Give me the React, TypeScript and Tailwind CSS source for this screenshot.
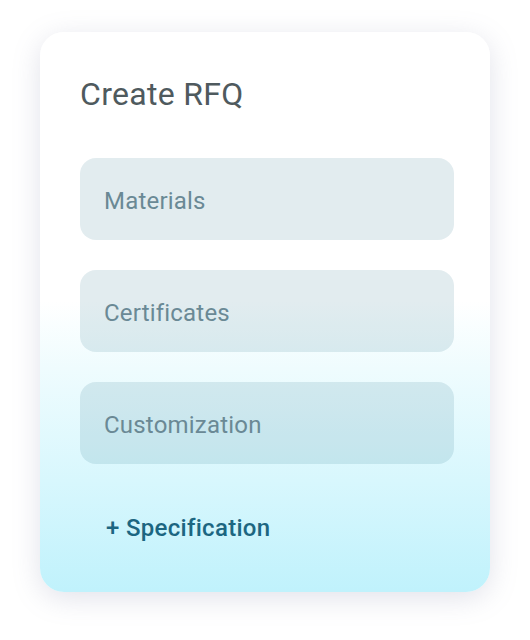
import React from "react";

const fields = ["Materials", "Certificates", "Customization"];

const App = () => {
  return (
    <div className="w-[530px] h-[640px] bg-white flex justify-center pt-[32px] font-['Roboto',sans-serif]">
      <div className="w-[450px] h-[560px] rounded-[24px] bg-[linear-gradient(180deg,#ffffff_0%,#ffffff_48%,#effcfe_60%,#d8f7fd_80%,#c0f2fc_100%)] shadow-[0_6px_28px_rgba(120,125,160,0.22)] px-[40px] pt-[43px] flex flex-col">
        <h1 className="text-[32px] leading-[38px] tracking-[0.3px] text-[#4f5a5e] font-normal">Create RFQ</h1>
        <div className="mt-[45px] flex flex-col gap-[30px]">
          {fields.map((f) => (
            <div
              key={f}
              className="h-[82px] w-[374px] rounded-[16px] bg-[#1f6a80]/[0.13] flex items-center px-[24px]"
            >
              <span className="mt-[3px] text-[24px] tracking-[0.2px] text-[#6a8995]">{f}</span>
            </div>
          ))}
        </div>
        <button className="mt-[49px] self-start ml-[26px] text-[24px] leading-[30px] tracking-[0.3px] font-medium text-[#1c6681]">
          + Specification
        </button>
      </div>
    </div>
  );
};

export default App;
